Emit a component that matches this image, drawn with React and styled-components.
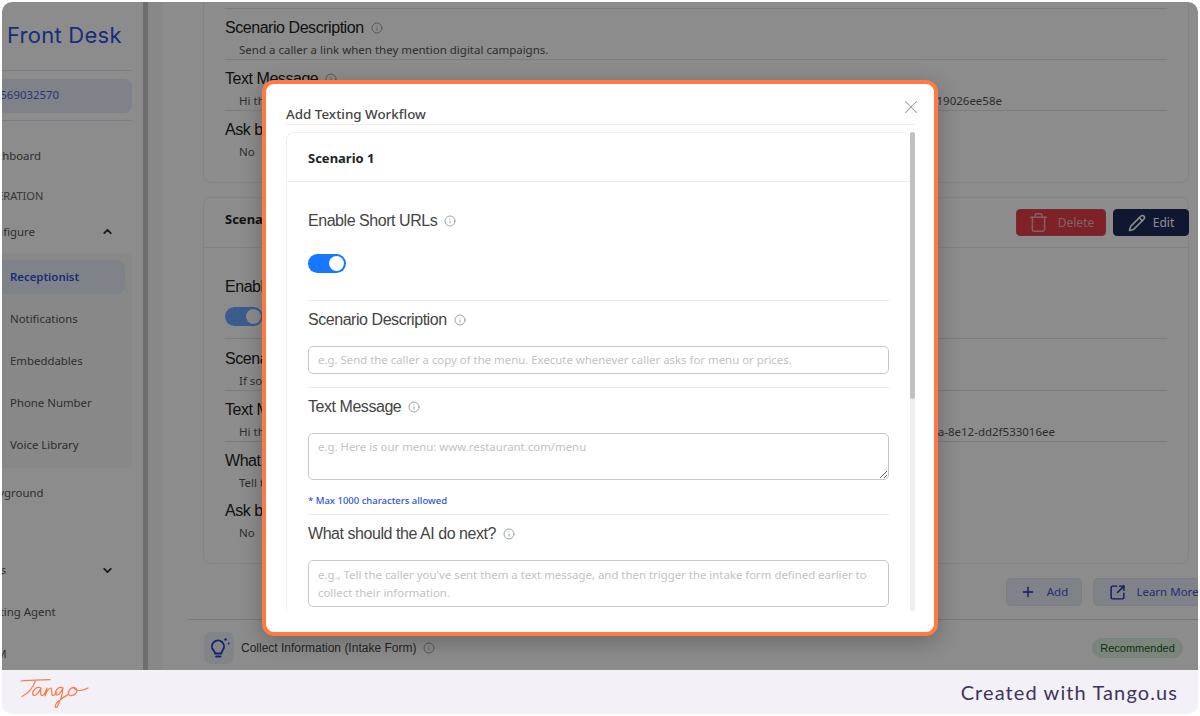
import React from "react";
import styled, { createGlobalStyle } from "styled-components";
import { Info, X, Trash, Pencil, Plus, SquareArrowOutUpRight, ChevronUp, ChevronDown } from "lucide-react";

const Global = createGlobalStyle`
  html, body { margin: 0; padding: 0; background: #fff; }
  #root { width: 1200px; height: 716px; overflow: hidden; }
  * { box-sizing: border-box; }
`;
const UI = `"Noto Sans", "Liberation Sans", sans-serif`;
const ARIAL = `"Liberation Sans", Arial, sans-serif`;

const Frame = styled.div`
  width: 1200px; height: 716px; padding: 2px; display: flex; flex-direction: column;
`;
const Screen = styled.div`
  position: relative; height: 668px; display: flex; overflow: hidden; background: #fff;
  border-radius: 10px 10px 0 0; flex: none;
`;
const Overlay = styled.div`
  position: absolute; inset: 0; background: rgba(0,0,0,.45);
`;
const Footer = styled.footer`
  height: 44px; background: #f3f1f7; border-radius: 0 0 10px 10px; display: flex; align-items: center;
  justify-content: space-between; padding: 0 20px 0 18px;
`;
const Created = styled.span`
  font: 400 20px/1 Lato, "Open Sans", sans-serif; letter-spacing: 1.1px; color: #3f3558;
`;

/* sidebar */
const Sidebar = styled.aside`
  width: 141px; flex: none; overflow: hidden; background: #fff;
`;
const SideInner = styled.div`
  width: 175px; margin-left: -45px; display: flex; flex-direction: column;
`;
const Logo = styled.div`
  height: 69px; padding: 0 0 3px 50px; display: flex; align-items: center; border-bottom: 1px solid #dfe5f2;
  font: 400 22px/1 Inter, sans-serif; color: #2c53e0; white-space: nowrap; letter-spacing: .25px;
`;
const PhoneWrap = styled.div`
  height: 50px; padding: 8px 10px 8px 20px; border-bottom: 1px solid #dfe5f2;
`;
const Phone = styled.div`
  height: 34px; width: 155px; border-radius: 8px; background: #e8edf7; font: 400 11.4px/32px ${UI}; color: #4468d0;
  text-align: right; padding-right: 73px; white-space: nowrap;
`;
const NavItem = styled.div`
  display: flex; align-items: center; justify-content: space-between; height: ${p => p.$h}px; padding: 0 18px ${p => p.$pb || 0}px 25px;
  font: 400 11.4px/1 ${UI}; color: #555; white-space: nowrap; margin-top: ${p => p.$mt || 0}px;
`;
const SectionLabel = styled(NavItem)`
  font-size: 11px; color: #666;
`;
const Sub = styled.div`
  width: 175px; height: 215px; background: #f8f8f8; padding: 7px 7px 3px 20px; border-radius: 6px;
`;
const SubItem = styled.div`
  height: ${p => p.$active ? 34 : 42}px; display: flex; align-items: center; padding-left: 33px; width: 148px;
  border-radius: 8px; font: ${p => p.$active ? 600 : 400} 11.4px/1 ${UI}; white-space: nowrap;
  color: ${p => p.$active ? "#2c53e0" : "#555"};
  background: ${p => p.$active ? "#e8edf7" : "transparent"};
  margin-bottom: ${p => p.$active ? 4 : 0}px;
`;
const Rule = styled.div`
  width: 5px; flex: none; background: #c8c8c8;
`;

/* main */
const Main = styled.main`
  flex: 1; min-width: 0; overflow: hidden; background: #fff; display: flex;
`;
const Gutter = styled.div`
  width: 15px; flex: none; background: #f8f8f8;
`;
const Band = styled.div`
  width: 13px; flex: none; background: #fff;
`;
const Content = styled.div`
  flex: 1; min-width: 0; overflow: hidden; padding: 0 9px 0 27px;
`;
const CutCard = styled.section`
  height: 181px; border: 1px solid #eee; border-top: 0; border-radius: 0 0 8px 8px; padding: 6px 21px 0 21px; margin-bottom: 14px;
`;
const Card = styled.section`
  height: 367px; border: 1px solid #eee; border-radius: 8px;
`;
const CardHead = styled.div`
  height: 50px; border-bottom: 1px solid #eee; display: flex; align-items: center; justify-content: space-between; padding: 0 0 0 21px;
  font: 700 13px/1 ${UI}; color: #222;
`;
const CardTitle = styled.span`
  margin-top: -6px;
`;
const Actions = styled.div`
  display: flex; gap: 7px; margin-right: -1px;
`;
const SolidBtn = styled.div`
  height: 27px; width: ${p => p.$w}px; border-radius: 4px; background: ${p => p.$bg}; border: 1px solid ${p => p.$bc};
  display: flex; align-items: center; justify-content: center; gap: ${p => p.$gap}px; font: 400 12px/1 ${UI}; color: ${p => p.$color};
`;
const CardBody = styled.div`
  padding: 26px 21px 0 21px;
`;
const BgRow = styled.div`
  border-bottom: ${p => p.$last ? "0" : "1px solid #e4e4e4"};
  height: ${p => p.$h}px; border-top: ${p => p.$top ? "1px solid #e4e4e4" : "0"};
  padding-top: ${p => p.$pt ?? 9}px;
`;
const BgLabel = styled.div`
  font: 400 16px/20px ${ARIAL}; letter-spacing: -.45px; color: #222; display: flex; align-items: center; gap: 7px; white-space: nowrap;
  height: 20px;
`;
const BgValue = styled.div`
  font: 400 11.5px/16px ${UI}; color: #555; padding: 4px 0 0 14px; white-space: nowrap; display: flex; justify-content: space-between;
  width: ${p => p.$w ? p.$w + "px" : "auto"};
`;
const BgSwitch = styled.div`
  width: 38px; height: 19px; border-radius: 10px; background: #1677ff; margin-top: 10px; position: relative; opacity: .62;
  &::after { content: ""; position: absolute; right: 2px; top: 2px; width: 15px; height: 15px; border-radius: 50%; background: #fff; }
`;
const BottomBar = styled.div`
  display: flex; justify-content: flex-end; gap: 11px; padding-top: 14px; margin-right: -26px; height: 56px; border-bottom: 1px solid #ddd; margin-left: -15px;
`;
const SoftBtn = styled.div`
  height: 28px; border-radius: 5px; background: #e8edf7; border: 1px solid #e0e7f3; display: flex; align-items: center; justify-content: center; gap: ${p => p.$gap}px;
  width: ${p => p.$w}px; flex: none; font: 400 11.5px/1 ${UI}; color: #3c5bc8; white-space: nowrap;
`;
const CollectRow = styled.div`
  display: flex; align-items: center; justify-content: space-between; height: 46px; padding-top: 10px; margin-left: 1px;
`;
const CollectLeft = styled.div`
  display: flex; align-items: center; gap: 7px; font: 400 12px/1 ${ARIAL}; color: #444;
`;
const BulbBox = styled.div`
  width: 30px; height: 32px; border-radius: 7px; background: #eef1f8; display: flex; align-items: center; justify-content: center;
`;
const Badge = styled.div`
  width: 91px; height: 20px; border-radius: 10px; background: #dff2e2; border: 1px solid #d8eedb; color: #1a5c26;
  font: 400 11px/18px ${ARIAL}; text-align: center; margin-right: 6px;
`;

/* modal */
const Modal = styled.div`
  position: absolute; left: 260px; top: 78px; width: 676px; height: 556px; background: #fff; border: 4px solid #ff7a45;
  border-radius: 12px; box-shadow: 0 6px 22px rgba(0,0,0,.25); padding: 0 0 0 20px; overflow: hidden;
`;
const Close = styled.button`
  position: absolute; right: 11px; top: 11px; width: 24px; height: 24px; padding: 0; border: 0; background: none; color: #999;
  display: flex; align-items: center; justify-content: center;
`;
const ModalTitle = styled.h2`
  margin: 0; height: 41px; width: 629px; border-bottom: 1px solid #eee; font: 500 13.4px/1 ${UI}; color: #444; padding-top: 24px;
`;
const ScrollArea = styled.div`
  margin-top: 7px; display: flex; height: 479px; width: 628px;
`;
const FormCard = styled.div`
  flex: none; width: 624px; border: 1px solid #f0f0f0; border-bottom: 0; border-right: 0; border-radius: 8px 8px 0 0; overflow: hidden;
`;
const FormHead = styled.div`
  height: 49px; border-bottom: 1px solid #eee; font: 700 13px/50px ${UI}; color: #222; padding-left: 21px;
`;
const FormBody = styled.div`
  padding: 0 21px;
`;
const Section = styled.div`
  border-bottom: ${p => p.$noline ? "0" : "1px solid #e8e8e8"};
  height: ${p => p.$h}px; padding-top: ${p => p.$pt}px; width: 581px;
`;
const Label = styled.label`
  display: flex; align-items: center; gap: 7px; height: 20px; font: 400 16px/20px ${ARIAL}; letter-spacing: -.45px; color: #444;
`;
const InfoIcon = styled(Info)`
  width: 12px; height: 12px; color: #9aa3ad; flex: none;
`;
const Switch = styled.div`
  width: 38px; height: 19px; border-radius: 10px; background: #1677ff; margin-top: 23px; position: relative;
  &::after { content: ""; position: absolute; right: 2px; top: 2px; width: 15px; height: 15px; border-radius: 50%; background: #fff; }
`;
const TextInput = styled.input`
  display: block; width: 581px; height: 28px; margin-top: 16px; border: 1px solid #cbc6c9; border-radius: 5px; padding: 0 9px 1px 9px;
  font: 400 11.4px/1 ${UI}; outline: none;
  &::placeholder { color: #c2c2c2; opacity: 1; }
`;
const TextArea = styled.textarea`
  display: block; width: 581px; height: 47px; margin-top: 16px; border: 1px solid #cbc6c9; border-radius: 5px; padding: ${p => p.$resize ? 4 : 5}px 9px;
  font: 400 11.4px/18px ${UI}; outline: none; resize: ${p => p.$resize ? "vertical" : "none"}; overflow: hidden;
  &::placeholder { color: #c2c2c2; opacity: 1; }
`;
const Hint = styled.div`
  font: 500 9.5px/1 ${UI}; color: #2c53e0; margin-top: 16px;
`;
const Scrollbar = styled.div`
  flex: none; width: 5px; height: 479px; background: #eee; border-radius: 3px;
`;
const Thumb = styled.div`
  width: 5px; height: 267px; background: #c1c1c1; border-radius: 3px;
`;

const TangoLogo = () => (
  <svg width="70" height="36" viewBox="0 0 70 36" fill="none" stroke="#ff7a45" strokeWidth="1.2" strokeLinecap="round" strokeLinejoin="round" aria-label="Tango" role="img">
    <path d="M1 7C9 6.2 20 6 30 5.6" />
    <path d="M15.5 7C13.5 12 9 19 2 22.5" />
    <path d="M21 14C17 12 12.5 16 12.5 20C13.5 23 18 21 21 14C20.5 18 20 22 22.5 21.5C24 21 26 17 27 14C26.5 17 25.5 20 25 22C26.5 18 29 14 31 14C32.5 14.5 31 19 32 21C33.5 22.5 36 20 37 18.5" />
    <path d="M43 14C39 12 35 16 35.5 20C37 23 41 19 43 14C42.5 20 40 28 37 33C35.5 34.5 34.5 32.5 36 30C38.5 26 44 23 49 20" />
    <path d="M55 13.5C51 13 47.5 17 48.5 20.5C50.5 23 56.5 21 57 16.5C57 14.5 55.5 13.5 54 14.5C56 17 62 17.5 68 14" />
  </svg>
);
const Bulb = () => (
  <svg width="24" height="24" viewBox="0 0 24 24" fill="none" stroke="#2044c4" strokeWidth="1.9" strokeLinecap="round" strokeLinejoin="round">
    <path d="M8 17.5c0-1.6-.7-2.3-1.7-3.3A6 6 0 1 1 16 13.8c-.9 1-1.6 1.8-1.6 3.7z" />
    <path d="M9 20.5h4.5" />
    <circle cx="18.5" cy="3.5" r="1.2" fill="#2044c4" stroke="none" />
    <circle cx="21.7" cy="7.5" r=".9" fill="#2044c4" stroke="none" />
  </svg>
);

const nav = ["Receptionist", "Notifications", "Embeddables", "Phone Number", "Voice Library"];

export default function App() {
  return (
    <Frame>
      <Global />
      <Screen>
        <Sidebar>
          <SideInner>
            <Logo>Front Desk</Logo>
            <PhoneWrap><Phone>+15569032570</Phone></PhoneWrap>
            <NavItem $h={42} $mt={14}>Dashboard</NavItem>
            <SectionLabel $h={38} $pb={2}>OPERATION</SectionLabel>
            <NavItem $h={38} $pb={5}>Configure<ChevronUp size={13} strokeWidth={3.5} color="#333" /></NavItem>
            <Sub>
              {nav.map((n, i) => <SubItem key={n} $active={i === 0}>{n}</SubItem>)}
            </Sub>
            <NavItem $h={49}>Playground</NavItem>
            <NavItem $h={38} $mt={34}>Bots<ChevronDown size={13} strokeWidth={3.5} color="#333" /></NavItem>
            <NavItem $h={42} $mt={2}>Texting Agent</NavItem>
            <NavItem $h={42}>CRM</NavItem>
          </SideInner>
        </Sidebar>
        <Rule />
        <Main>
          <Gutter /><Band />
          <Content>
            <CutCard>
              <BgRow $top $h={52} $pt={9}>
                <BgLabel>Scenario Description <InfoIcon /></BgLabel>
                <BgValue>Send a caller a link when they mention digital campaigns.</BgValue>
              </BgRow>
              <BgRow $h={51} $pt={9}>
                <BgLabel>Text Message <InfoIcon /></BgLabel>
                <BgValue $w={777}><span>Hi there</span><span>https://frontdesk.example.com/19026ee58e</span></BgValue>
              </BgRow>
              <BgRow $last $h={60} $pt={9}>
                <BgLabel>Ask before</BgLabel>
                <BgValue>No</BgValue>
              </BgRow>
            </CutCard>
            <Card>
              <CardHead>
                <CardTitle>Scenario 2</CardTitle>
                <Actions>
                  <SolidBtn $w={90} $gap={9} $bg="#e63e48" $bc="#d8505f" $color="#eeb0b5"><Trash size={21} strokeWidth={1.7} />Delete</SolidBtn>
                  <SolidBtn $w={76} $gap={7} $bg="#1e2a58" $bc="#1e2a58" $color="#fff"><Pencil size={18} strokeWidth={2} />Edit</SolidBtn>
                </Actions>
              </CardHead>
              <CardBody>
                <BgRow $h={65} $pt={3}>
                  <BgLabel>Enable Short URLs</BgLabel>
                  <BgSwitch />
                </BgRow>
                <BgRow $h={52} $pt={10}>
                  <BgLabel>Scenario Description</BgLabel>
                  <BgValue>If someone asks</BgValue>
                </BgRow>
                <BgRow $h={51}>
                  <BgLabel>Text Message</BgLabel>
                  <BgValue $w={830}><span>Hi there</span><span>https://frontdesk.example.com/a-8e12-dd2f533016ee</span></BgValue>
                </BgRow>
                <BgRow $last $h={51}>
                  <BgLabel>What should the AI do next?</BgLabel>
                  <BgValue>Tell them</BgValue>
                </BgRow>
                <BgRow $last $h={50} $pt={8}>
                  <BgLabel>Ask before</BgLabel>
                  <BgValue>No</BgValue>
                </BgRow>
              </CardBody>
            </Card>
            <BottomBar>
              <SoftBtn $w={76} $gap={11}><Plus size={16} color="#1b2fb0" />Add</SoftBtn>
              <SoftBtn $w={122} $gap={10}><SquareArrowOutUpRight size={17} color="#1b2fb0" />Learn More</SoftBtn>
            </BottomBar>
            <CollectRow>
              <CollectLeft><BulbBox><Bulb /></BulbBox>Collect Information (Intake Form) <InfoIcon /></CollectLeft>
              <Badge>Recommended</Badge>
            </CollectRow>
          </Content>
        </Main>
        <Overlay />
        <Modal>
          <Close aria-label="Close"><X size={22} strokeWidth={1.1} /></Close>
          <ModalTitle>Add Texting Workflow</ModalTitle>
          <ScrollArea>
            <FormCard>
              <FormHead>Scenario 1</FormHead>
              <FormBody>
                <Section $h={119} $pt={29}>
                  <Label>Enable Short URLs <InfoIcon /></Label>
                  <Switch />
                </Section>
                <Section $h={87} $pt={9}>
                  <Label>Scenario Description <InfoIcon /></Label>
                  <TextInput placeholder="e.g. Send the caller a copy of the menu. Execute whenever caller asks for menu or prices." />
                </Section>
                <Section $h={127} $pt={9}>
                  <Label>Text Message <InfoIcon /></Label>
                  <TextArea $resize placeholder="e.g. Here is our menu: www.restaurant.com/menu" />
                  <Hint>* Max 1000 characters allowed</Hint>
                </Section>
                <Section $noline $h={110} $pt={9}>
                  <Label>What should the AI do next? <InfoIcon /></Label>
                  <TextArea placeholder="e.g., Tell the caller you've sent them a text message, and then trigger the intake form defined earlier to collect their information." />
                </Section>
              </FormBody>
            </FormCard>
            <Scrollbar><Thumb /></Scrollbar>
          </ScrollArea>
        </Modal>
      </Screen>
      <Footer>
        <TangoLogo />
        <Created>Created with Tango.us</Created>
      </Footer>
    </Frame>
  );
}
